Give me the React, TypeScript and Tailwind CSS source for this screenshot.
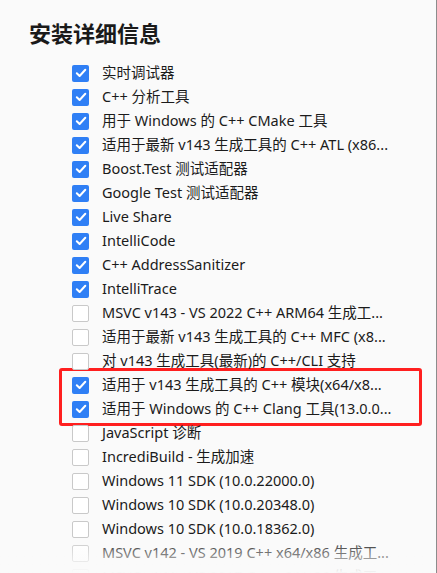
import React from 'react'

const ITEMS: [string, boolean][] = [
  ['实时调试器', true],
  ['C++ 分析工具', true],
  ['用于 Windows 的 C++ CMake 工具', true],
  ['适用于最新 v143 生成工具的 C++ ATL (x86...', true],
  ['Boost.Test 测试适配器', true],
  ['Google Test 测试适配器', true],
  ['Live Share', true],
  ['IntelliCode', true],
  ['C++ AddressSanitizer', true],
  ['IntelliTrace', true],
  ['MSVC v143 - VS 2022 C++ ARM64 生成工...', false],
  ['适用于最新 v143 生成工具的 C++ MFC (x8...', false],
  ['对 v143 生成工具(最新)的 C++/CLI 支持', false],
  ['适用于 v143 生成工具的 C++ 模块(x64/x8...', true],
  ['适用于 Windows 的 C++ Clang 工具(13.0.0...', true],
  ['JavaScript 诊断', false],
  ['IncrediBuild - 生成加速', false],
  ['Windows 11 SDK (10.0.22000.0)', false],
  ['Windows 10 SDK (10.0.20348.0)', false],
  ['Windows 10 SDK (10.0.18362.0)', false],
  ['MSVC v142 - VS 2019 C++ x64/x86 生成工...', false],
  ['MSVC v141 - VS 2017 C++ x64/x86 生成工...', false],
]

const Checkbox = ({ checked }: { checked: boolean }) =>
  checked ? (
    <span className="flex h-[17px] w-[17px] shrink-0 items-center justify-center rounded-[2px] bg-[#2f7ff5]">
      <svg width="12" height="12" viewBox="0 0 12 12" fill="none">
        <path d="M1.8 6.3 L4.6 9 L10.3 2.8" stroke="white" strokeWidth="2" strokeLinecap="round" strokeLinejoin="round" />
      </svg>
    </span>
  ) : (
    <span className="h-[17px] w-[17px] shrink-0 rounded-[2px] border border-[#c9c9c9] bg-white" />
  )

const Row = ({ label, checked }: { label: string; checked: boolean }) => (
  <div className="flex h-[24px] items-center gap-[13px]">
    <Checkbox checked={checked} />
    <span className="whitespace-nowrap text-[14.5px] text-[#1b1b1b]">{label}</span>
  </div>
)

export default function App() {
  const before = ITEMS.slice(0, 13)
  const boxed = ITEMS.slice(13, 15)
  const after = ITEMS.slice(15)

  return (
    <div
      className="relative h-[573px] w-[437px] overflow-hidden border-r border-[#8c8c8c] bg-[#fafafa]"
      style={{ fontFamily: '"Segoe UI", "Noto Sans", "Noto Sans CJK SC", sans-serif' }}
    >
      <h1 className="pl-[29px] pt-[17px] text-[22px] font-semibold leading-[33px] text-[#1a1a1a]">
        安装详细信息
      </h1>

      <div className="mt-[11px] pl-[72px]">
        {before.map(([label, checked]) => (
          <Row key={label} label={label} checked={checked} />
        ))}
        {/* red annotation box: extends 5px past the rows without shifting them */}
        <div className="-my-[5px] -ml-[13px] mr-[14px] rounded-[3px] border-[3px] border-[#ff1f1f] py-[2px] pl-[10px]">
          {boxed.map(([label, checked]) => (
            <Row key={label} label={label} checked={checked} />
          ))}
        </div>
        {after.map(([label, checked]) => (
          <Row key={label} label={label} checked={checked} />
        ))}
      </div>

      <div className="pointer-events-none absolute bottom-0 left-0 right-0 h-[34px] bg-gradient-to-b from-[#fafafa00] to-[#fafafa]" />
    </div>
  )
}
